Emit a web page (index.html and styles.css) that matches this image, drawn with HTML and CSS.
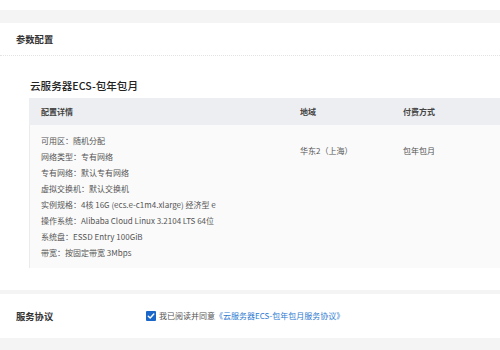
FILE: index.html
```html
<!DOCTYPE html>
<html lang="zh">
<head>
<meta charset="utf-8">
<link rel="stylesheet" href="styles.css">
</head>
<body>
<div class="topbar"></div>
<section class="card">
  <div class="card-head">参数配置</div>
  <div class="card-body">
    <h2 class="prod-title">云服务器ECS-包年包月</h2>
    <div class="table">
      <div class="th">配置详情</div>
      <div class="th">地域</div>
      <div class="th">付费方式</div>
      <div class="td detail">
        <div>可用区：随机分配</div>
        <div>网络类型：专有网络</div>
        <div>专有网络：默认专有网络</div>
        <div>虚拟交换机：默认交换机</div>
        <div>实例规格：4核 16G (ecs.e-c1m4.xlarge) 经济型 e</div>
        <div>操作系统：Alibaba Cloud Linux 3.2104 LTS 64位</div>
        <div>系统盘：ESSD Entry 100GiB</div>
        <div>带宽：按固定带宽 3Mbps</div>
      </div>
      <div class="td side">华东2（上海）</div>
      <div class="td side">包年包月</div>
    </div>
  </div>
</section>
<section class="card agree">
  <div class="agree-label">服务协议</div>
  <label class="agree-check">
    <span class="box"><svg viewBox="0 0 10 10" width="10" height="10"><path d="M2.3 5.2 L4.2 7 L7.8 3" fill="none" stroke="#fff" stroke-width="1.4" stroke-linecap="round" stroke-linejoin="round"/></svg></span>
    <span class="agree-text">我已阅读并同意</span><a class="agree-link">《云服务器ECS-包年包月服务协议》</a>
  </label>
</section>
</body>
</html>
```
FILE: styles.css
```css
html, body {
  margin: 0;
  padding: 0;
}
body {
  background: #f4f4f5;
  font-family: "Noto Sans CJK SC", "Noto Sans", sans-serif;
  color: #555;
  width: 500px;
  height: 350px;
  overflow: hidden;
}
.topbar {
  height: 10px;
  background: #fff;
  margin-bottom: 13px;
}
.card {
  background: #fff;
}
.card-head {
  height: 32px;
  line-height: 33px;
  padding-left: 16px;
  font-size: 9.3px;
  font-weight: 700;
  color: #333;
  border-bottom: 1px dotted #e3e3e3;
}
.card-body {
  padding: 21px 0 22px 29px;
}
.prod-title {
  margin: 0 0 4px 1px;
  font-size: 10.6px;
  line-height: 17px;
  font-weight: 500;
  color: #222;
}
.table {
  display: grid;
  grid-template-columns: 259px 103px 1fr;
}
.th {
  background: #eceef1;
  height: 27px;
  line-height: 27px;
  padding-left: 12px;
  font-size: 8px;
  font-weight: 700;
  color: #444;
}
.td {
  background: #fafafa;
  font-size: 8px;
  line-height: 16px;
  color: #555;
}
.detail {
  padding: 8px 0 7px 12px;
  border-left: 1px solid #ebebeb;
  padding-left: 11px;
}
.side {
  padding: 18px 0 0 12px;
}
.agree {
  margin-top: 4px;
  height: 44px;
  display: flex;
  align-items: center;
}
.agree-label {
  width: 130px;
  padding-left: 16px;
  font-size: 9.3px;
  font-weight: 700;
  color: #333;
}
.agree-check {
  display: flex;
  align-items: center;
  font-size: 8px;
  line-height: 12px;
}
.box {
  width: 10px;
  height: 10px;
  background: #1b66c9;
  border-radius: 1px;
  margin-right: 3px;
  display: flex;
}
.agree-text {
  color: #555;
}
.agree-link {
  color: #2e7ad1;
}
```
